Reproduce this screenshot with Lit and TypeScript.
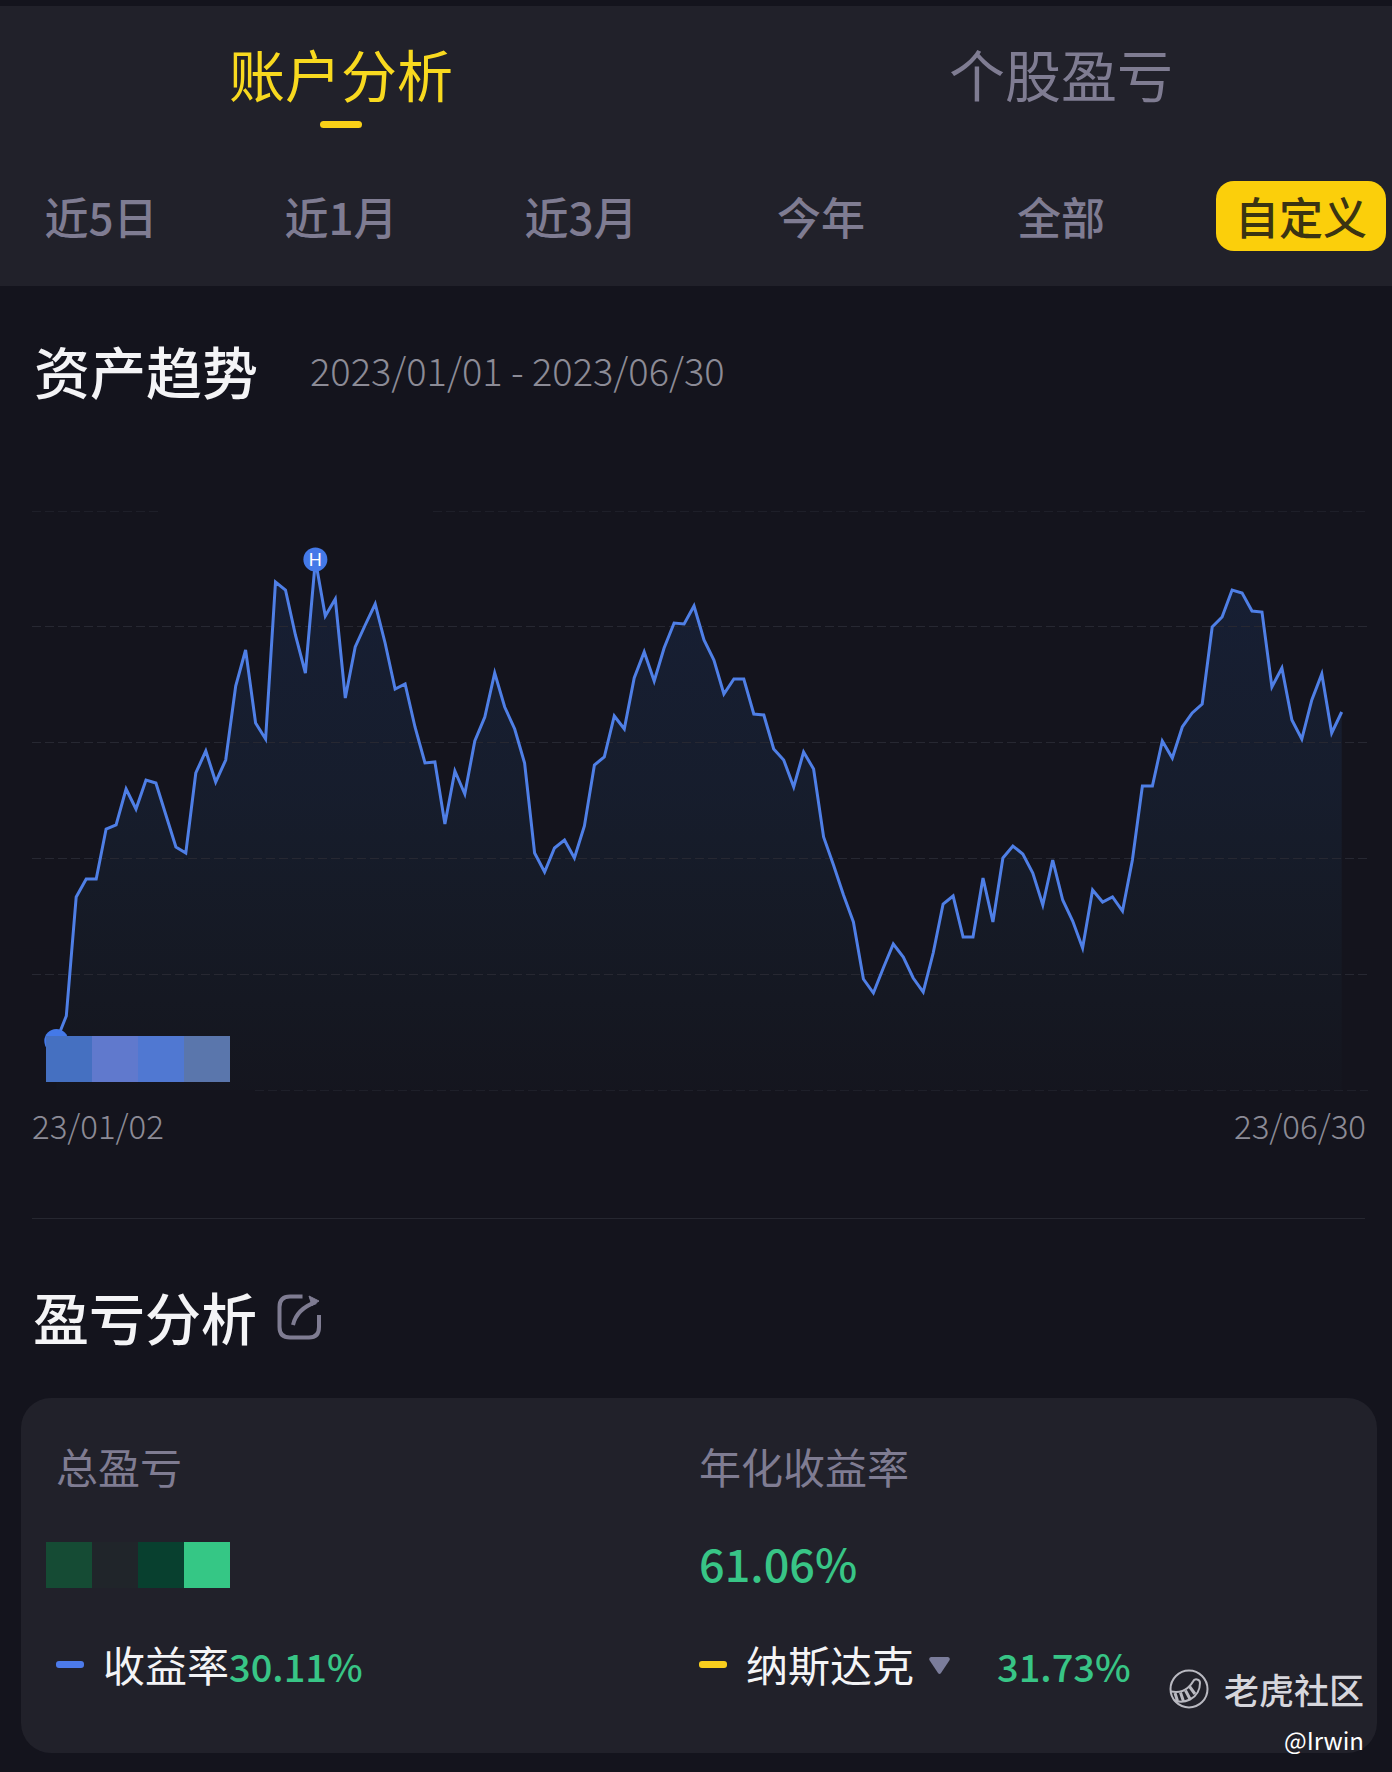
import { LitElement, html, svg, css } from "lit";
import { customElement, state } from "lit/decorators.js";
import { classMap } from "lit/directives/class-map.js";

const VALUES = [
  1041, 1016, 897, 879, 879, 829, 825, 789, 809, 780, 783, 815, 847, 853, 773, 751, 782, 760, 686, 650,
  723, 739, 582, 590, 635, 673, 560, 616, 599, 698, 647, 625, 604, 643, 689, 684, 727, 763, 762, 824,
  771, 794, 741, 717, 673, 707, 729, 763, 853, 872, 848, 840, 858, 826, 765, 757, 716, 729, 678, 652,
  681, 648, 623, 624, 606, 640, 660, 694, 679, 679, 714, 715, 749, 760, 787, 752, 769, 837, 865, 895,
  922, 979, 993, 968, 944, 957, 978, 992, 953, 904, 896, 937, 937, 878, 922, 858, 846, 854, 873, 905,
  860, 900, 921, 948, 890, 902, 897, 911, 860, 786, 786, 741, 758, 727, 713, 704, 627, 617, 590, 593,
  611, 612, 687, 668, 720, 739, 700, 674, 733, 712,
];
const START_X = 56.3;
const END_X = 1341.7;
const BASE_Y = 1090;
const PEAK = 26;

const xAt = (i: number) => START_X + ((END_X - START_X) * i) / (VALUES.length - 1);
const LINE = VALUES.map((y, i) => `${xAt(i).toFixed(1)},${y}`).join(" ");
const AREA = `${START_X},${BASE_Y} ${LINE} ${END_X},${BASE_Y}`;

@customElement("asset-chart")
export class AssetChart extends LitElement {
  static styles = css`
    :host {
      display: block;
    }
    .plot {
      display: block;
      width: 100%;
      height: auto;
    }
    .grid {
      stroke: #272832;
      stroke-width: 1;
      stroke-dasharray: 9 4;
    }
    .faint {
      stroke: #1e1f29;
    }
    .line {
      fill: none;
      stroke: #4f7fe6;
      stroke-width: 3;
      stroke-linejoin: miter;
    }
    .dot {
      fill: #4479e8;
    }
    .mark {
      fill: #fff;
      font: 400 18px "Liberation Sans", sans-serif;
      text-anchor: middle;
    }
  `;

  render() {
    return html`
      <svg class="plot" viewBox="0 402 1392 703" role="img" aria-label="资产趋势">
        <defs>
          <linearGradient id="fill" gradientUnits="userSpaceOnUse" x1="0" y1="560" x2="0" y2="1090">
            <stop offset="0" stop-color="#1d3666" stop-opacity="0.32"></stop>
            <stop offset="0.45" stop-color="#1d3658" stop-opacity="0.26"></stop>
            <stop offset="1" stop-color="#1d3a46" stop-opacity="0.04"></stop>
          </linearGradient>
        </defs>
        <polygon points=${AREA} fill="url(#fill)"></polygon>
        <path class="grid faint" d="M32 511.5H158M433 511.5H1368"></path>
        ${[626.5, 742.5, 858.5, 974.5].map((y) => svg`<path class="grid" d="M32 ${y}H1368"></path>`)}
        <path class="grid faint" d="M255 1090.5H1368"></path>
        <polyline class="line" points=${LINE}></polyline>
        <circle class="dot" cx=${START_X} cy="1041" r="12"></circle>
        <circle class="dot" cx=${xAt(PEAK)} cy="559.5" r="12"></circle>
        <text class="mark" x=${xAt(PEAK)} y="566">H</text>
        <rect x="46" y="1036" width="46" height="46" fill="#4570c1"></rect>
        <rect x="92" y="1036" width="46" height="46" fill="#6079cd"></rect>
        <rect x="138" y="1036" width="46" height="46" fill="#5078d2"></rect>
        <rect x="184" y="1036" width="46" height="46" fill="#5a76ac"></rect>
      </svg>
    `;
  }
}

@customElement("app-root")
export class AppRoot extends LitElement {
  @state() private tab = 0;
  @state() private range = 5;

  private tabs = ["账户分析", "个股盈亏"];
  private ranges = ["近5日", "近1月", "近3月", "今年", "全部", "自定义"];

  static styles = css`
    :host {
      display: block;
      position: relative;
      background: #14141d;
      color: #f4f4f6;
      font-family: "Noto Sans CJK SC", sans-serif;
      min-height: 100vh;
    }
    * {
      box-sizing: border-box;
    }
    button,
    select {
      font: inherit;
      color: inherit;
      border: 0;
      margin: 0;
      padding: 0;
      background: none;
      cursor: pointer;
    }
    .header {
      border-top: 6px solid #14141d;
      background: #21212a;
      padding-bottom: 35px;
    }
    .tabs {
      display: grid;
      grid-template-columns: 1fr 1fr;
      gap: 58px;
      padding: 35px 0 0 10px;
    }
    .tab {
      display: flex;
      flex-direction: column;
      align-items: center;
      gap: 16px;
      font-size: 56px;
      line-height: 64px;
      color: #7f7c92;
    }
    .tab.on {
      color: #f8d91f;
    }
    .bar {
      width: 42px;
      height: 7px;
      border-radius: 4px;
    }
    .on .bar {
      background: #f9d017;
    }
    .ranges {
      display: grid;
      grid-template-columns: repeat(6, 1fr);
      gap: 70px;
      padding: 53px 6px 0 16px;
    }
    .range {
      height: 70px;
      border-radius: 18px;
      font-size: 44px;
      font-weight: 500;
      line-height: 64px;
      white-space: nowrap;
      color: #7f7c92;
    }
    .range.on {
      background: #fbcf0b;
      color: #3b3412;
    }
    .title {
      display: flex;
      align-items: center;
      padding: 0 33px;
    }
    .trend {
      padding: 52px 34px 0;
    }
    .heading {
      margin: 0;
      font-size: 56px;
      font-weight: 500;
      line-height: 64px;
    }
    .dates {
      margin-left: 52px;
      font-size: 38px;
      font-weight: 300;
      line-height: 64px;
      color: #8c8b96;
    }
    .axis {
      display: flex;
      justify-content: space-between;
      margin: 0 26px 0 32px;
      font-size: 33px;
      font-weight: 300;
      line-height: 40px;
      color: #8c8b96;
    }
    .rule {
      height: 1px;
      margin: 73px 27px 65px 32px;
      border: 0;
      background: #262730;
    }
    .share {
      display: flex;
      margin-left: 18px;
    }
    .card {
      display: grid;
      grid-template-columns: 1fr 1fr;
      margin: 50px 15px 0 21px;
      padding: 44px 35px 64px;
      border-radius: 30px;
      background: #21212a;
    }
    .label {
      font-size: 42px;
      line-height: 48px;
      color: #7f7c92;
    }
    .value {
      height: 46px;
      margin: 52px 0 51px;
      font-size: 45px;
      font-weight: 500;
      line-height: 42px;
      color: #38c586;
    }
    .hidden {
      display: flex;
      margin-left: -10px;
    }
    .block {
      width: 46px;
      height: 46px;
    }
    .b1 {
      background: #154b34;
    }
    .b2 {
      background: #20252a;
    }
    .b3 {
      background: #08402f;
    }
    .b4 {
      background: #35c785;
    }
    .series {
      display: flex;
      align-items: center;
      font-size: 42px;
      line-height: 48px;
      white-space: nowrap;
    }
    .dash {
      width: 28px;
      height: 7px;
      margin-right: 19px;
      border-radius: 3px;
    }
    .blue {
      background: #4c7aea;
    }
    .yellow {
      background: #f9cf1d;
    }
    .pick {
      display: flex;
      align-items: center;
      gap: 14px;
      margin-right: 47px;
    }
    .index {
      appearance: none;
      height: 48px;
      line-height: 48px;
    }
    .arrow {
      margin-top: 4px;
    }
    .rate {
      padding-top: 4px;
      font-size: 38px;
      font-weight: 500;
      line-height: 46px;
      color: #38c586;
    }
    .credit {
      position: absolute;
      right: 28px;
      bottom: 16px;
      display: flex;
      flex-direction: column;
      align-items: flex-end;
      gap: 11px;
    }
    .brand {
      display: flex;
      align-items: center;
      gap: 15px;
      font-size: 35px;
      font-weight: 500;
      line-height: 48px;
      color: #d6d6dc;
    }
    .author {
      font-size: 24px;
      line-height: 32px;
      color: #fff;
    }
  `;

  render() {
    return html`
      <header class="header">
        <div class="tabs" role="tablist">
          ${this.tabs.map(
            (t, i) => html`<button
              class=${classMap({ tab: true, on: this.tab === i })}
              role="tab"
              aria-selected=${this.tab === i}
              @click=${() => (this.tab = i)}
            >
              <span>${t}</span><span class="bar"></span>
            </button>`,
          )}
        </div>
        <nav class="ranges">
          ${this.ranges.map(
            (r, i) => html`<button
              class=${classMap({ range: true, on: this.range === i })}
              aria-pressed=${this.range === i}
              @click=${() => (this.range = i)}
            >${r}</button>`,
          )}
        </nav>
      </header>

      <section>
        <div class="title trend">
          <h2 class="heading">资产趋势</h2>
          <span class="dates">2023/01/01 - 2023/06/30</span>
        </div>
        <asset-chart></asset-chart>
        <div class="axis"><span>23/01/02</span><span>23/06/30</span></div>
      </section>

      <hr class="rule" />

      <section>
        <div class="title">
          <h2 class="heading">盈亏分析</h2>
          <button class="share" aria-label="分享">
            <svg width="50" height="50" viewBox="0 0 50 50" fill="none" stroke="#7f7c92" stroke-width="4" stroke-linecap="butt" stroke-linejoin="round">
              <path d="M27.500 5.500H15Q4.500 5.500 4.500 16V36Q4.500 46.500 15 46.500H34Q44 46.500 44 36V24"></path>
              <path d="M18 34C20 25 27 16 41 11"></path>
              <path d="M34 5L44 10L37 14.500Z" fill="#7f7c92" stroke-width="1"></path>
            </svg>
          </button>
        </div>
        <div class="card">
          <div>
            <div class="label">总盈亏</div>
            <div class="value hidden">
              <span class="block b1"></span><span class="block b2"></span
              ><span class="block b3"></span><span class="block b4"></span>
            </div>
            <div class="series">
              <span class="dash blue"></span><span>收益率</span><span class="rate">30.11%</span>
            </div>
          </div>
          <div>
            <div class="label">年化收益率</div>
            <div class="value">61.06%</div>
            <div class="series">
              <span class="dash yellow"></span>
              <label class="pick">
                <select class="index" aria-label="指数">
                  <option>纳斯达克</option>
                </select>
                <svg class="arrow" width="21" height="18" viewBox="0 0 21 18" fill="#7b7d9b">
                  <path d="M2 0H19Q22 1 20 4L12 16Q10.500 18 9 16L1 4Q-1 1 2 0Z"></path>
                </svg>
              </label>
              <span class="rate">31.73%</span>
            </div>
          </div>
        </div>
      </section>

      <div class="credit">
        <div class="brand">
          <svg width="40" height="40" viewBox="0 0 40 40" fill="none" stroke="#b9b9c1" stroke-width="2">
            <circle cx="20" cy="20" r="18.500"></circle>
            <path d="M2 22.500C8 23.500 14 23 18.500 19C21.500 16.500 23 14.500 24 12.500C25.500 9 31 10 31 14C31 20 28 27 21 30.500C15 33.500 9 33 5 31"></path>
            <path d="M6 24L8.500 32M11.500 23.500L14.500 32.500M16.500 21.500L21 30M20.500 17.500L26 25" stroke-width="3"></path>
          </svg>
          <span>老虎社区</span>
        </div>
        <span class="author">@Irwin</span>
      </div>
    `;
  }
}
